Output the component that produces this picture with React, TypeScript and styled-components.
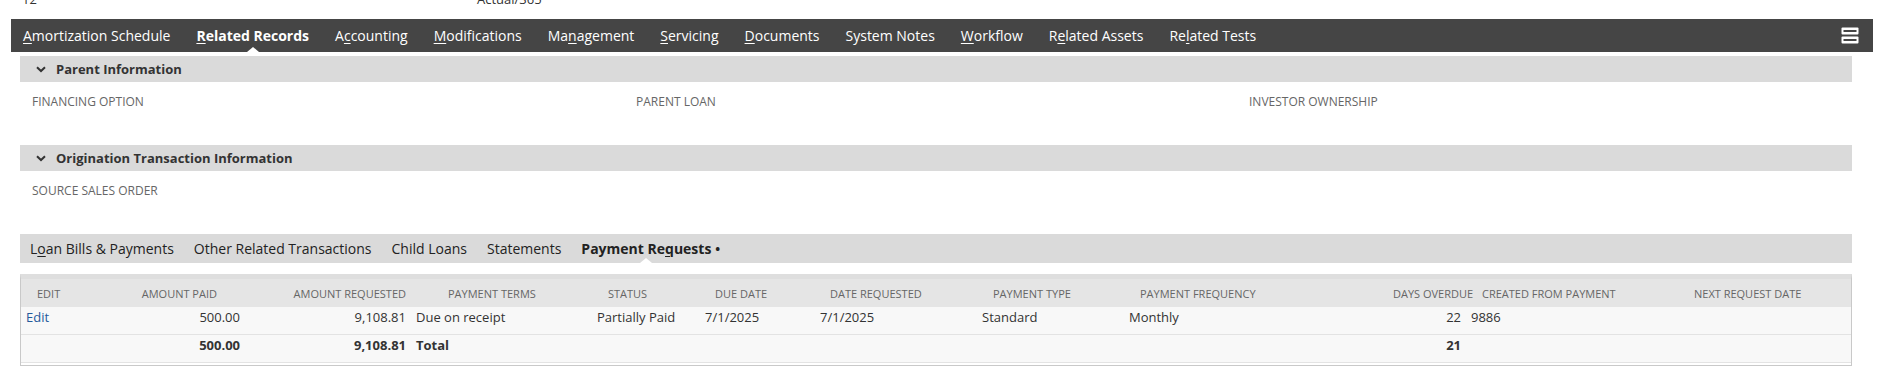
import styled, { createGlobalStyle } from "styled-components";

const GlobalStyle = createGlobalStyle`
    body {
        margin: 0;
        background: #fff;
        font-family: "Open Sans", "Liberation Sans", sans-serif;
        color: #333;
    }
`;

type Col = { label: string; width: number; align: "left" | "right"; headAlign: "left" | "right"; headPad: number };

const columns: Col[] = [
    { label: "Edit", width: 60, align: "left", headAlign: "left", headPad: 16 },
    { label: "Amount Paid", width: 164, align: "right", headAlign: "right", headPad: 28 },
    { label: "Amount Requested", width: 166, align: "right", headAlign: "right", headPad: 5 },
    { label: "Payment Terms", width: 181, align: "left", headAlign: "left", headPad: 37 },
    { label: "Status", width: 108, align: "left", headAlign: "left", headPad: 16 },
    { label: "Due Date", width: 115, align: "left", headAlign: "left", headPad: 15 },
    { label: "Date Requested", width: 162, align: "left", headAlign: "left", headPad: 15 },
    { label: "Payment Type", width: 147, align: "left", headAlign: "left", headPad: 16 },
    { label: "Payment Frequency", width: 206, align: "left", headAlign: "left", headPad: 16 },
    { label: "Days Overdue", width: 136, align: "right", headAlign: "left", headPad: 63 },
    { label: "Created From Payment", width: 214, align: "left", headAlign: "left", headPad: 16 },
    { label: "Next Request Date", width: 171, align: "left", headAlign: "left", headPad: 14 },
];

const rows = [
    ["Edit", "500.00", "9,108.81", "Due on receipt", "Partially Paid", "7/1/2025", "7/1/2025", "Standard", "Monthly", "22", "9886", ""],
];
const totals = ["", "500.00", "9,108.81", "Total", "", "", "", "", "", "21", "", ""];

const navItems: [string, number, boolean][] = [
    ["Amortization Schedule", 0, false],
    ["Related Records", 0, true],
    ["Accounting", 1, false],
    ["Modifications", 0, false],
    ["Management", 2, false],
    ["Servicing", 0, false],
    ["Documents", 0, false],
    ["System Notes", -1, false],
    ["Workflow", 0, false],
    ["Related Assets", 1, false],
    ["Related Tests", 2, false],
];

const subtabs: [string, number, boolean][] = [
    ["Loan Bills & Payments", 1, false],
    ["Other Related Transactions", -1, false],
    ["Child Loans", -1, false],
    ["Statements", -1, false],
    ["Payment Requests", 10, true],
];

// underline the access-key letter
const withKey = (text: string, idx: number) =>
    idx < 0 ? text : <>{text.slice(0, idx)}<u>{text[idx]}</u>{text.slice(idx + 1)}</>;

const App = () => {
    return <Page>
        <GlobalStyle />
        <TopStrip>
            <TopValue $width={455}>12</TopValue>
            <TopValue $width={300}>Actual/365</TopValue>
        </TopStrip>

        <NavBar>
            {navItems.map(([t, k, active]) =>
                <NavItem key={t} $active={active}>{withKey(t, k)}</NavItem>
            )}
            <MenuButton>
                <svg width="18" height="17" viewBox="0 0 18 17">
                    <rect x="0.5" y="0.5" width="17" height="7" rx="1" fill="#fff" />
                    <rect x="2.5" y="3" width="13" height="2" fill="#454545" />
                    <rect x="0.5" y="9.5" width="17" height="7" rx="1" fill="#fff" />
                    <rect x="2.5" y="12" width="13" height="2" fill="#454545" />
                </svg>
            </MenuButton>
        </NavBar>

        <Content>
            <SectionHeader>
                <Chevron viewBox="0 0 10 7"><path d="M1 1.2 L5 5 L9 1.2" /></Chevron>
                Parent Information
            </SectionHeader>
            <FieldGrid $cols={3}>
                <FieldLabel>Financing Option</FieldLabel>
                <FieldLabel>Parent Loan</FieldLabel>
                <FieldLabel>Investor Ownership</FieldLabel>
            </FieldGrid>

            <SectionHeader>
                <Chevron viewBox="0 0 10 7"><path d="M1 1.2 L5 5 L9 1.2" /></Chevron>
                Origination Transaction Information
            </SectionHeader>
            <FieldGrid $cols={1}>
                <FieldLabel>Source Sales Order</FieldLabel>
            </FieldGrid>

            <SubtabBar>
                {subtabs.map(([t, k, active]) =>
                    <Subtab key={t} $active={active}>{withKey(t, k)}{active && <Dot>•</Dot>}</Subtab>
                )}
            </SubtabBar>
            <SubtabSpacer />

            <ListWrap>
                <ListTable>
                    <colgroup>
                        {columns.map(c => <col key={c.label} style={{ width: c.width }} />)}
                    </colgroup>
                    <thead>
                        <tr>
                            {columns.map(c =>
                                <HeadCell key={c.label} $align={c.headAlign} $pad={c.headPad}>{c.label}</HeadCell>
                            )}
                        </tr>
                    </thead>
                    <tbody>
                        {rows.map((r, i) =>
                            <tr key={i}>
                                {r.map((v, j) =>
                                    <Cell key={j} $align={columns[j].align}>
                                        {j === 0 ? <EditLink>{v}</EditLink> : v}
                                    </Cell>
                                )}
                            </tr>
                        )}
                        <tr>
                            {totals.map((v, j) =>
                                <Cell key={j} $align={columns[j].align} $bold>{v}</Cell>
                            )}
                        </tr>
                    </tbody>
                </ListTable>
            </ListWrap>
        </Content>
    </Page>;
};

const Page = styled.div`
    width: 1883px;
    overflow: hidden;
`;

const TopStrip = styled.div`
    display: flex;
    height: 28px;
    margin-top: -9px;
    padding-left: 22px;
    font-size: 13px;
    line-height: 17px;
    color: #333;
`;

const TopValue = styled.div<{ $width: number }>`
    width: ${p => p.$width}px;
`;

const NavBar = styled.div`
    display: flex;
    align-items: center;
    gap: 26px;
    height: 33px;
    margin: 0 10px 0 11px;
    padding-left: 12px;
    background: #454545;
`;

const NavItem = styled.div<{ $active: boolean }>`
    position: relative;
    height: 33px;
    line-height: 33px;
    font-size: 14px;
    color: #fff;
    font-weight: ${p => (p.$active ? 700 : 400)};
    white-space: nowrap;

    u {
        text-decoration-thickness: 1px;
        text-underline-offset: 2px;
    }

    ${p => p.$active && `
        &::after {
            content: "";
            position: absolute;
            left: 50%;
            bottom: 0;
            margin-left: -6px;
            border: 6px solid transparent;
            border-bottom: 5px solid #fff;
            border-top-width: 0;
        }
    `}
`;

const MenuButton = styled.div`
    display: flex;
    margin-left: auto;
    margin-right: 14px;
`;

const Content = styled.div`
    padding: 4px 31px 0 20px;
`;

const SectionHeader = styled.div`
    display: flex;
    align-items: center;
    height: 26px;
    padding-left: 16px;
    background: #dadada;
    font-size: 13px;
    font-weight: 700;
    color: #333;
`;

const Chevron = styled.svg`
    width: 10px;
    height: 7px;
    margin-right: 10px;
    fill: none;
    stroke: #333;
    stroke-width: 2;
`;

const FieldGrid = styled.div<{ $cols: number }>`
    display: grid;
    grid-template-columns: ${p => (p.$cols === 3 ? "604px 613px 1fr" : "1fr")};
    height: 63px;
    padding: 11px 0 0 12px;
    box-sizing: border-box;
`;

const FieldLabel = styled.div`
    font-size: 12px;
    line-height: 17px;
    text-transform: uppercase;
    color: #666;
`;

const SubtabBar = styled.div`
    display: flex;
    align-items: center;
    gap: 20px;
    height: 29px;
    padding-left: 10px;
    background: #dadada;
`;

const Subtab = styled.div<{ $active: boolean }>`
    position: relative;
    height: 29px;
    line-height: 29px;
    font-size: 14px;
    color: #222;
    font-weight: ${p => (p.$active ? 700 : 400)};
    white-space: nowrap;

    u {
        text-decoration-thickness: 1px;
        text-underline-offset: 2px;
    }

    ${p => p.$active && `
        &::after {
            content: "";
            position: absolute;
            left: 50%;
            bottom: 0;
            margin-left: -11px;
            border: 6px solid transparent;
            border-bottom: 5px solid #fff;
            border-top-width: 0;
        }
    `}
`;

const Dot = styled.span`
    margin-left: 4px;
    font-size: 13px;
`;

const SubtabSpacer = styled.div`
    height: 11px;
`;

const ListWrap = styled.div`
    padding-bottom: 2px;
    border: 1px solid #c9c9c9;
    border-top: 5px solid #dedede;
`;

const ListTable = styled.table`
    width: 100%;
    table-layout: fixed;
    border-collapse: collapse;
`;

const HeadCell = styled.th<{ $align: string; $pad: number }>`
    height: 28px;
    padding: 0 ${p => (p.$align === "right" ? p.$pad : 0)}px 0 ${p => (p.$align === "left" ? p.$pad : 0)}px;
    background: #e5e5e5;
    text-align: ${p => p.$align};
    font-size: 11px;
    font-weight: 400;
    color: #666;
    text-transform: uppercase;
    white-space: nowrap;
    overflow: visible;
`;

const Cell = styled.td<{ $align: string; $bold?: boolean }>`
    height: 26px;
    padding: 1px 5px 0;
    vertical-align: top;
    background: #f8f8f8;
    border-bottom: 1px solid #e3e3e3;
    text-align: ${p => p.$align};
    font-size: 13px;
    line-height: 18px;
    font-weight: ${p => (p.$bold ? 700 : 400)};
    color: #333;
    white-space: nowrap;
`;

const EditLink = styled.a`
    color: #255a9b;
    text-decoration: none;
    cursor: pointer;
`;

export default App;
